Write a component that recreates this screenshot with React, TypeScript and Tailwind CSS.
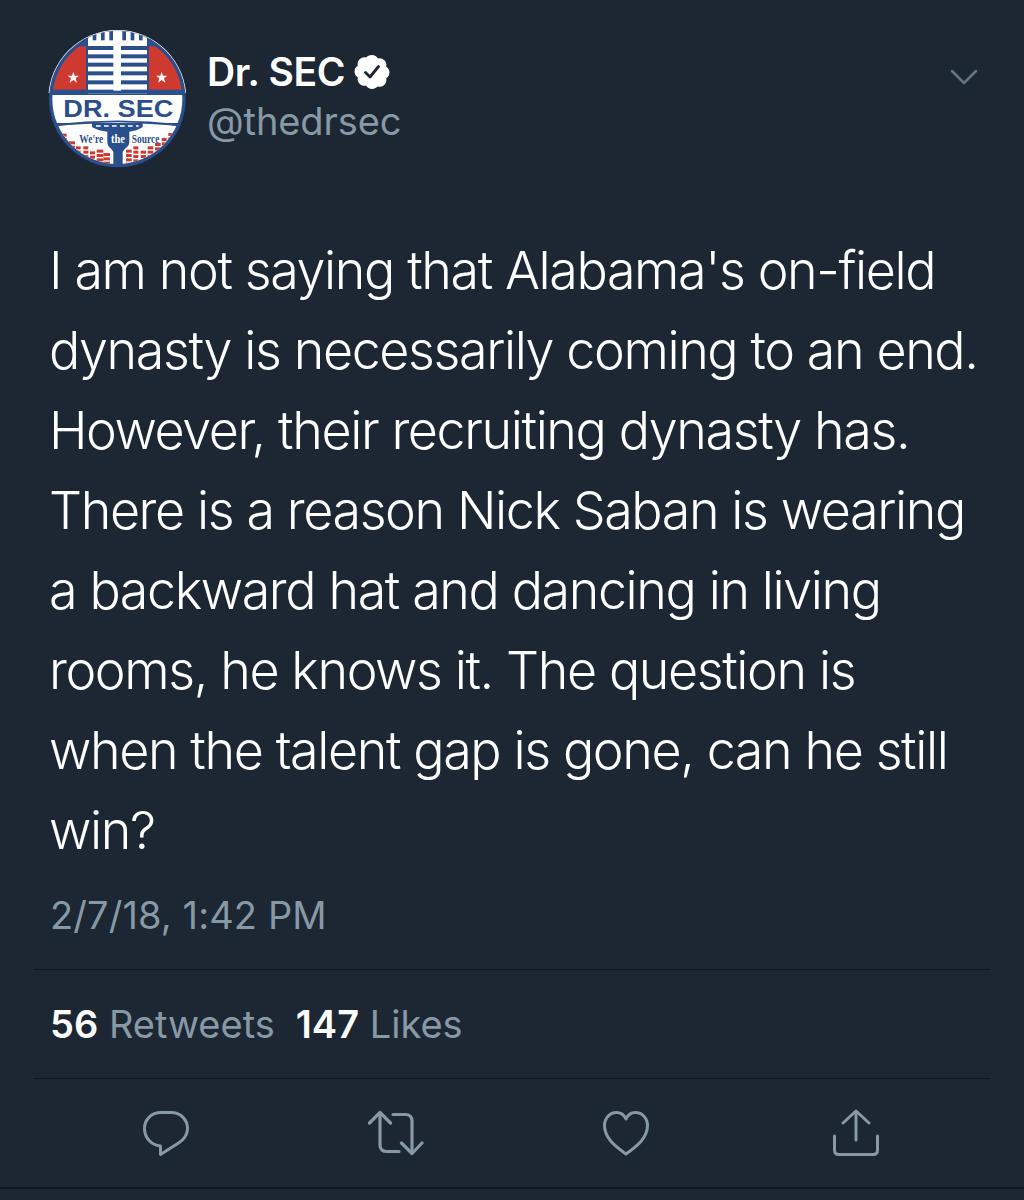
const lines = [
  "I am not saying that Alabama's on-field",
  "dynasty is necessarily coming to an end.",
  "However, their recruiting dynasty has.",
  "There is a reason Nick Saban is wearing",
  "a backward hat and dancing in living",
  "rooms, he knows it. The question is",
  "when the talent gap is gone, can he still",
  "win?",
];

// x, width, top, bottom of each equalizer column in the logo
const eqColumns = [
  [95, 15, 342, 358],
  [115, 20, 365, 380],
  [138, 14, 380, 400],
  [160, 15, 380, 415],
  [180, 15, 395, 420],
  [200, 20, 390, 430],
  [220, 20, 400, 435],
  [288, 17, 390, 435],
  [310, 15, 380, 425],
  [332, 16, 393, 420],
  [353, 17, 380, 410],
  [375, 17, 370, 395],
  [395, 15, 355, 380],
  [415, 15, 340, 360],
];

function Logo() {
  const blue = "#2a4f8c";
  const red = "#cf3a30";
  return (
    <svg viewBox="54 28 420 420" className="w-[140px] h-[140px] shrink-0">
      <defs>
        <clipPath id="outer">
          <circle cx="262" cy="238" r="204" />
        </clipPath>
        <clipPath id="inner">
          <circle cx="262" cy="238" r="195" />
        </clipPath>
        <clipPath id="upper">
          <rect x="50" y="20" width="430" height="200" />
        </clipPath>
      </defs>
      <circle cx="262" cy="238" r="207" fill="#ffffff" clipPath="url(#upper)" />
      <circle cx="262" cy="238" r="205" fill={blue} />
      <g clipPath="url(#inner)">
        <rect x="60" y="80" width="108" height="134" fill={red} />
        <rect x="357" y="80" width="108" height="134" fill={red} />
        <rect x="50" y="226" width="430" height="84" fill="#ffffff" />
        <path d="M60 322 Q262 298 466 322 L466 450 L60 450 Z" fill="#ffffff" />
        {eqColumns.map(([x, w, top, bottom]) => {
          const rows = [];
          for (let y = top; y < bottom; y += 13) rows.push(y);
          return rows.map((y) => <rect key={`${x}-${y}`} x={x} y={y} width={w} height="9" fill={red} />);
        })}
      </g>
      <g clipPath="url(#outer)">
        <rect x="174" y="30" width="177" height="192" fill="#ffffff" />
        {[188, 213, 238, 277, 302, 327].map((x) => (
          <rect key={x} x={x} y="30" width="11" height="32" fill={blue} />
        ))}
        {[79, 104, 129, 155, 182].map((y) => (
          <rect key={y} x="174" y={y} width="177" height="12" fill={blue} />
        ))}
        <rect x="250" y="40" width="23" height="180" fill="#ffffff" />
        <rect x="60" y="210" width="410" height="12" fill={blue} />
        <rect x="250" y="205" width="23" height="8" fill="#ffffff" />
      </g>
      <path d="M186 310 L338 310 L338 322 Q320 334 298 336 L298 366 Q298 378 286 386 L278 396 L278 437 L250 437 L250 396 L242 386 Q232 378 232 366 L232 336 Q206 334 186 322 Z" fill={blue} />
      <path d="M72 316 Q262 294 452 316" fill="none" stroke={blue} strokeWidth="5" />
      <path d="M198 319 L326 319" stroke="#ffffff" strokeWidth="4" strokeDasharray="14 10" />
      <polygon points="130,156 134,168 147,168 137,176 141,189 130,181 119,189 123,176 113,168 126,168" fill="#ffffff" />
      <polygon points="395,156 399,168 412,168 402,176 406,189 395,181 384,189 388,176 378,168 391,168" fill="#ffffff" />
      <text x="100" y="293" fill={blue} className="font-['Liberation_Sans',sans-serif] font-bold text-[74px]" textLength="330" lengthAdjust="spacingAndGlyphs">
        DR. SEC
      </text>
      <text x="148" y="369" fill={blue} className="font-['Liberation_Serif',serif] font-bold text-[40px]" textLength="72" lengthAdjust="spacingAndGlyphs">
        We're
      </text>
      <text x="243" y="369" fill="#ffffff" className="font-['Liberation_Serif',serif] font-bold text-[40px]" textLength="42" lengthAdjust="spacingAndGlyphs">
        the
      </text>
      <text x="305" y="369" fill={blue} className="font-['Liberation_Serif',serif] font-bold text-[40px]" textLength="83" lengthAdjust="spacingAndGlyphs">
        Source
      </text>
    </svg>
  );
}

function Verified() {
  return (
    <svg viewBox="0 0 36 36" className="w-[36px] h-[36px] shrink-0">
      <path
        fill="#ffffff"
        d="M18 1c2.600 0 4.700 1.400 5.900 3.400 2.300-.6 4.700 0 6.500 1.800 1.800 1.800 2.400 4.300 1.800 6.500 2 1.200 3.300 3.200 3.300 5.800s-1.300 4.600-3.300 5.800c.6 2.200 0 4.700-1.800 6.500-1.800 1.800-4.200 2.400-6.500 1.800C22.700 33.600 20.600 35 18 35s-4.700-1.400-5.900-3.400c-2.300.6-4.700 0-6.500-1.800-1.800-1.800-2.400-4.300-1.800-6.500C1.800 22.100.5 20.100.5 17.500s1.300-4.600 3.300-5.800c-.6-2.200 0-4.700 1.800-6.500C7.400 3.400 9.800 2.800 12.100 3.400 13.300 2.400 15.400 1 18 1z"
      />
      <path d="M11.500 18.500l4.500 4.500 8.500-10.500" fill="none" stroke="#1c2733" strokeWidth="2.800" strokeLinecap="round" strokeLinejoin="round" />
    </svg>
  );
}

function ActionIcons() {
  const c = "#8899a6";
  return (
    <div className="h-[108px] grid grid-cols-[repeat(4,230px)] justify-items-center items-center pl-[51px]">
      <svg viewBox="0 0 48 48" className="w-[48px] h-[48px]" fill="none" stroke={c} strokeWidth="3" strokeLinejoin="round">
        <path d="M19 3.500h10C38.500 3.500 45.500 10.500 45.500 19.500c0 6.500-3.500 11-9 14.500L18.500 45.500V37C9.500 36 2.500 29 2.500 19.500 2.500 10.500 9.500 3.500 19 3.500z" />
      </svg>
      <svg viewBox="0 0 56 48" className="w-[56px] h-[48px]" fill="none" stroke={c} strokeWidth="3.200" strokeLinecap="round" strokeLinejoin="round">
        <path d="M1.500 14 12 3.500 22.500 14" />
        <path d="M12 4v32c0 4 2.500 6.500 6.500 6.500H31" />
        <path d="M54 34 44 44.500 33.500 34" />
        <path d="M44 44V12c0-4-2.500-6.500-6.500-6.500H25" />
      </svg>
      <svg viewBox="0 0 48 48" className="w-[48px] h-[48px]" fill="none" stroke={c} strokeWidth="3" strokeLinejoin="round">
        <path d="M24 45C13 37 2.500 29 2.500 16.500 2.500 9 8 3.500 14.500 3.500 18.500 3.500 22 5.500 24 10c2-4.500 5.500-6.500 9.500-6.500C40 3.500 45.500 9 45.500 16.500 45.500 29 35 37 24 45z" />
      </svg>
      <svg viewBox="0 0 48 48" className="w-[48px] h-[48px]" fill="none" stroke={c} strokeWidth="3" strokeLinecap="round" strokeLinejoin="round">
        <path d="M11 14 24 2 37 14" />
        <path d="M24 3v28" />
        <path d="M2.500 27v14c0 3 1.500 4.500 4.500 4.500h34c3 0 4.500-1.500 4.500-4.500V27" />
      </svg>
    </div>
  );
}

export default function App() {
  return (
    <div className="w-[1024px] h-[1200px] bg-[#1c2733] overflow-hidden font-['Inter',sans-serif]">
      <div className="h-[231px] flex pt-[29px] pl-[48px] pr-[48px]">
        <Logo />
        <div className="ml-[19px] pt-[18px]">
          <div className="flex items-center gap-[9px] h-[50px] text-[39px] font-semibold text-white tracking-[-0.3px]">
            Dr. SEC
            <Verified />
          </div>
          <div className="h-[48px] text-[38px] leading-[48px] font-normal text-[#8899a6] tracking-[-0.1px]">@thedrsec</div>
        </div>
        <svg viewBox="0 0 28 16" className="ml-auto mr-[-2px] mt-[40px] w-[28px] h-[16px]" fill="none" stroke="#66757f" strokeWidth="2.500" strokeLinecap="round" strokeLinejoin="round">
          <path d="M2 2 14 14 26 2" />
        </svg>
      </div>

      <div className="pl-[49px] text-[52px] leading-[80px] font-light text-white tracking-[-1.4px] whitespace-nowrap">
        {lines.map((line) => (
          <div key={line}>{line}</div>
        ))}
      </div>

      <div className="pl-[50px] mt-[18px] h-[80px] text-[38px] leading-[52px] text-[#8899a6] tracking-[0.1px]">
        2/7/18, 1:42 PM
      </div>

      <div className="mx-[34px] border-t border-[#0f161e]" />
      <div className="h-[108px] flex items-center gap-[21px] pl-[50px] text-[38px] text-[#8899a6] pt-[1px]">
        <span>
          <span className="font-semibold text-white">56</span> Retweets
        </span>
        <span>
          <span className="font-semibold text-white">147</span> Likes
        </span>
      </div>
      <div className="mx-[34px] border-t border-[#0f161e]" />

      <ActionIcons />
      <div className="border-t-2 border-[#10171e]" />
    </div>
  );
}
